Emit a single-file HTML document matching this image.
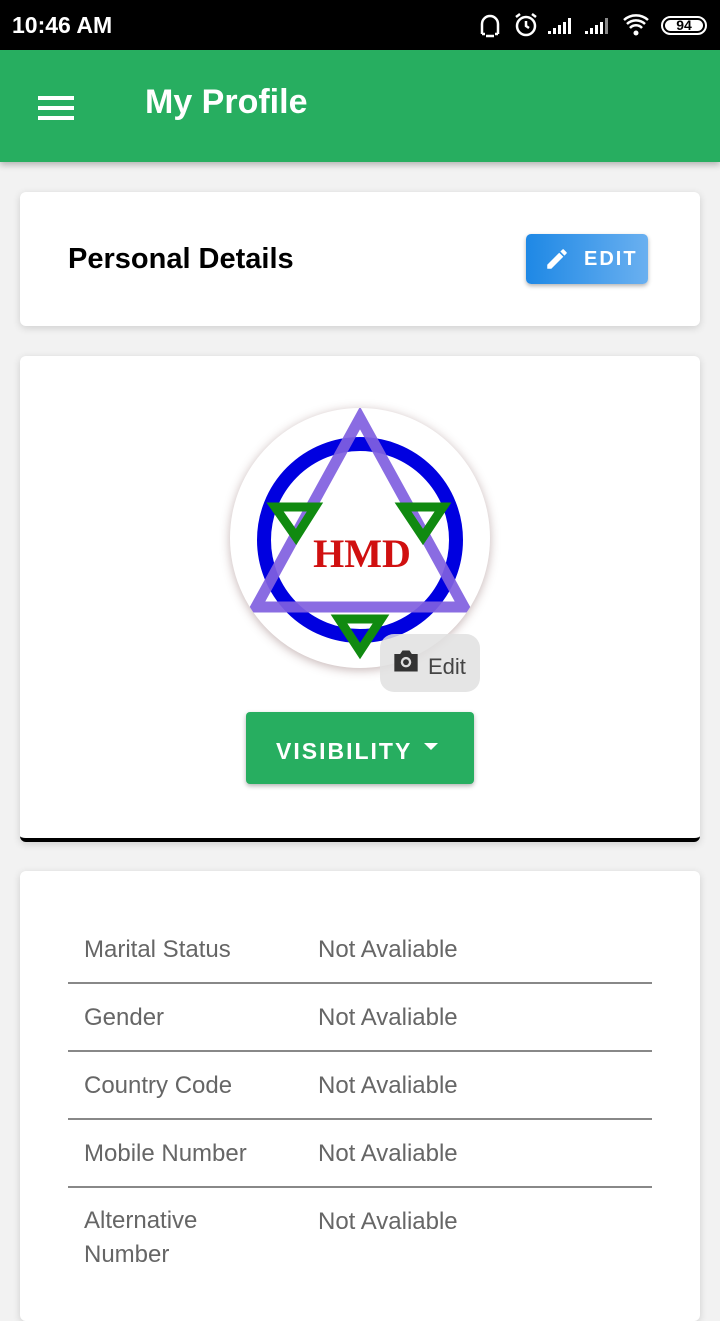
<!DOCTYPE html>
<html><head><meta charset="utf-8"><style>
body{margin:0;width:720px;height:1280px;background:#f2f2f2;font-family:"Liberation Sans",Roboto,sans-serif;position:relative;overflow:hidden}
.sb{position:absolute;top:0;left:0;width:720px;height:50px;background:#000;color:#fff}
.ab{position:absolute;top:50px;left:0;width:720px;height:112px;background:#27ae60;box-shadow:0 3px 6px rgba(0,0,0,.25)}
.card{position:absolute;left:20px;width:680px;background:#fff;border-radius:6px;box-shadow:0 2px 8px rgba(0,0,0,.15)}
.row{position:absolute;left:68px;width:584px;border-bottom:2px solid #888;font-size:24px;color:#666}
.row span{position:absolute;left:16px}
.row b{font-weight:normal;position:absolute;left:250px}
</style></head><body>
<div class="sb">
<div style="position:absolute;left:12px;top:12px;font-size:23px;font-weight:bold">10:46 AM</div>
<svg style="position:absolute;left:478px;top:12px" width="240" height="28" viewBox="0 0 240 28">
<path d="M4 22V12a8 8 0 0 1 16 0v10M4 22h3M17 22h3M8 24h8" stroke="#fff" stroke-width="2.5" fill="none"/>
<circle cx="48" cy="14" r="9" stroke="#fff" stroke-width="2.5" fill="none"/><path d="M48 9v5l3 2M38 5l4-3M58 5l-4-3" stroke="#fff" stroke-width="2.5" fill="none"/>
<path d="M70 22h3v-3h-3zM75 22h3v-6h-3zM80 22h3v-9h-3zM85 22h3v-12h-3zM90 22h3v-16h-3z" fill="#fff"/>
<path d="M107 22h3v-3h-3zM112 22h3v-6h-3zM117 22h3v-9h-3zM122 22h3v-12h-3z" fill="#fff"/><path d="M127 22h3v-16h-3z" fill="#888"/>
<path d="M146 8a18 18 0 0 1 24 0M149 12a13 13 0 0 1 18 0M152 16a8 8 0 0 1 12 0" stroke="#fff" stroke-width="2.5" fill="none"/><circle cx="158" cy="21" r="2.5" fill="#fff"/>
<rect x="184" y="5" width="44" height="17" rx="8.5" stroke="#fff" stroke-width="2" fill="none"/><rect x="187" y="8" width="38" height="11" rx="5.5" fill="#fff"/>
<text x="206" y="18" font-size="14" font-weight="bold" text-anchor="middle" fill="#000" font-family="Liberation Sans">94</text>
</svg></div>
<div class="ab">
<div style="position:absolute;left:38px;top:46px;width:36px;height:4px;background:#fff;box-shadow:0 10px 0 #fff,0 20px 0 #fff"></div>
<div style="position:absolute;left:145px;top:33px;color:#fff;font-size:34px;font-weight:bold">My Profile</div>
</div>
<div class="card" style="top:192px;height:134px">
<div style="position:absolute;left:48px;top:51px;font-size:29px;font-weight:bold;color:#000">Personal Details</div>
<div style="position:absolute;left:506px;top:42px;width:122px;height:50px;border-radius:5px;background:linear-gradient(90deg,#1e88e5,#6ab0f0);box-shadow:0 2px 4px rgba(0,0,0,.3);color:#fff;font-size:20px;font-weight:bold;letter-spacing:2px">
<svg style="position:absolute;left:18px;top:12px" width="26" height="26" viewBox="0 0 24 24"><path d="M3 17.25V21h3.75L17.8 9.94l-3.75-3.75zM20.7 7.04a1 1 0 0 0 0-1.41l-2.34-2.34a1 1 0 0 0-1.41 0l-1.83 1.83 3.75 3.75z" fill="#fff"/></svg>
<span style="position:absolute;left:58px;top:14px">EDIT</span></div>
</div>
<div class="card" style="top:356px;height:482px;border-bottom:4px solid #000">
<div style="position:absolute;left:210px;top:52px;width:260px;height:260px;border-radius:50%;background:#fff;box-shadow:0 2px 10px rgba(90,40,40,.35);overflow:hidden">
<svg width="260" height="260" viewBox="230 408 260 260">
<circle cx="360" cy="540" r="96" stroke="#0000e0" stroke-width="14" fill="none"/>
<path d="M360 418L256 607H464Z" stroke="#8060e0" stroke-width="11" fill="none" opacity=".92"/>
<path d="M275 507h40l-19 30zM403 507h40l-20 30z" stroke="#108a10" stroke-width="9" fill="none"/>
<path d="M339 619h42l-21 32z" stroke="#108a10" stroke-width="9" fill="none"/>
<text x="362" y="567" font-family="Liberation Serif,serif" font-weight="bold" font-size="40" fill="#d01010" text-anchor="middle">HMD</text>
</svg></div>
<div style="position:absolute;left:360px;top:278px;width:100px;height:58px;border-radius:14px;background:rgba(225,225,225,.85)">
<svg style="position:absolute;left:12px;top:14px" width="28" height="26" viewBox="0 0 24 22"><path d="M2 5h5l2-3h6l2 3h5v15H2z" fill="#333"/><circle cx="12" cy="12" r="4.5" fill="#ddd"/><circle cx="12" cy="12" r="2.5" fill="#333"/></svg>
<span style="position:absolute;left:48px;top:20px;font-size:22px;color:#444">Edit</span></div>
<div style="position:absolute;left:226px;top:356px;width:228px;height:72px;border-radius:4px;background:#27ae60;box-shadow:0 2px 5px rgba(0,0,0,.3);color:#fff;font-size:23px;font-weight:bold;letter-spacing:2px">
<span style="position:absolute;left:30px;top:26px">VISIBILITY</span>
<div style="position:absolute;left:178px;top:31px;border-left:7px solid transparent;border-right:7px solid transparent;border-top:7px solid #fff"></div></div>
</div>
<div class="card" style="top:871px;height:450px"></div>
<div class="row" style="top:916px;height:66px"><span style="top:20px">Marital Status</span><b style="top:20px">Not Avaliable</b></div>
<div class="row" style="top:984px;height:66px"><span style="top:20px">Gender</span><b style="top:20px">Not Avaliable</b></div>
<div class="row" style="top:1052px;height:66px"><span style="top:20px">Country Code</span><b style="top:20px">Not Avaliable</b></div>
<div class="row" style="top:1120px;height:66px"><span style="top:20px">Mobile Number</span><b style="top:20px">Not Avaliable</b></div>
<div class="row" style="top:1188px;height:100px;border:none"><span style="line-height:34px;top:16px">Alternative<br>Number</span><b style="top:20px">Not Avaliable</b></div>
</body></html>
